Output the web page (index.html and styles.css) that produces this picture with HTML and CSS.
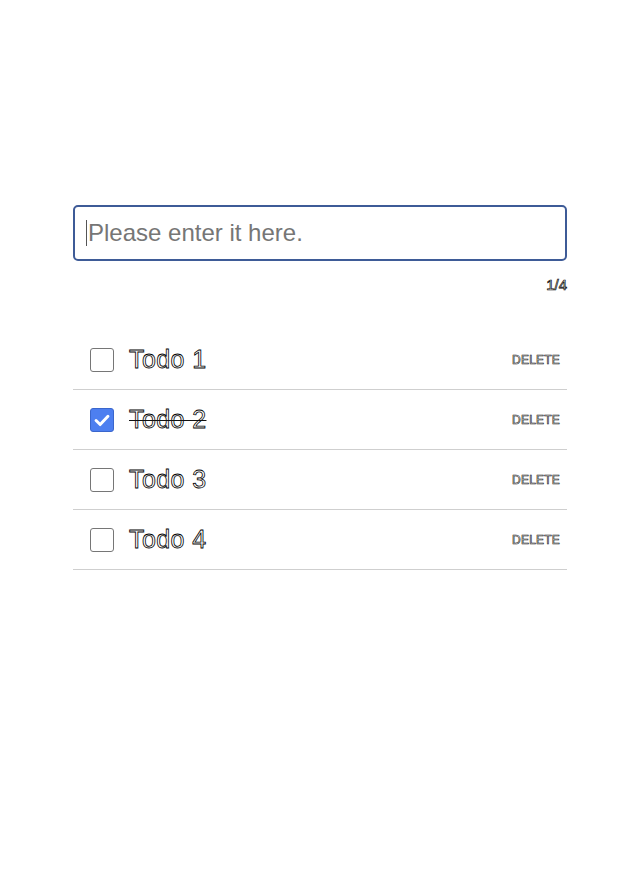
FILE: index.html
```html
<!DOCTYPE html>
<html lang="en">
<head>
<meta charset="utf-8">
<title>Todo</title>
<link rel="stylesheet" href="styles.css">
</head>
<body>
<main class="app">
  <div class="field">
    <span class="caret"></span>
    <input class="entry" type="text" placeholder="Please enter it here.">
  </div>
  <div class="counter">1/4</div>
  <ul class="list">
    <li class="item">
      <span class="box"></span>
      <span class="label">Todo 1</span>
      <button class="del">DELETE</button>
    </li>
    <li class="item done">
      <span class="box checked"><svg viewBox="0 0 24 24" width="24" height="24"><path d="M5.5 12.5l4.5 4.5 8.5-9" fill="none" stroke="#fff" stroke-width="3.2" stroke-linecap="round" stroke-linejoin="round"/></svg></span>
      <span class="label">Todo 2</span>
      <button class="del">DELETE</button>
    </li>
    <li class="item">
      <span class="box"></span>
      <span class="label">Todo 3</span>
      <button class="del">DELETE</button>
    </li>
    <li class="item">
      <span class="box"></span>
      <span class="label">Todo 4</span>
      <button class="del">DELETE</button>
    </li>
  </ul>
</main>
</body>
</html>
```
FILE: styles.css
```css
html, body {
  margin: 0;
  padding: 0;
  background: #fff;
}
body {
  font-family: "Liberation Sans", Arial, sans-serif;
  color: #222;
}
.app {
  width: 494px;
  margin: 0 0 0 73px;
  padding-top: 205px;
}
.field {
  position: relative;
}
.caret {
  position: absolute;
  left: 13px;
  top: 15px;
  width: 1px;
  height: 26px;
  background: #555;
}
.entry {
  display: block;
  box-sizing: border-box;
  width: 494px;
  height: 56px;
  border: 2px solid #3e5b97;
  border-radius: 5px;
  padding: 0 0 0 13px;
  font-family: "Liberation Sans", Arial, sans-serif;
  font-size: 24px;
  color: #222;
  outline: none;
  background: #fff;
}
.entry::placeholder {
  color: #767676;
}
.counter {
  text-align: right;
  font-size: 15px;
  line-height: 18px;
  margin-top: 15px;
  color: transparent;
  -webkit-text-stroke: 0.7px #000;
}
.list {
  list-style: none;
  margin: 36px 0 0 0;
  padding: 0;
}
.item {
  display: flex;
  align-items: center;
  height: 59px;
  border-bottom: 1px solid #cfcfcf;
  padding: 0 7px 0 17px;
}
.box {
  box-sizing: border-box;
  width: 24px;
  height: 24px;
  border: 1px solid #767676;
  border-radius: 3px;
  flex: none;
  display: flex;
  align-items: center;
  justify-content: center;
}
.box.checked {
  background: #4d7ff0;
  border: 1px solid #3a66cc;
}
.box svg {
  display: block;
}
.label {
  margin-left: 15px;
  font-size: 25px;
  letter-spacing: 0.4px;
  font-family: "Liberation Sans", Arial, sans-serif;
  color: transparent;
  -webkit-text-stroke: 0.8px #000;
  flex: 1;
}
.done .label {
  text-decoration: line-through;
  text-decoration-color: #111;
  text-decoration-thickness: 1px;
}
.del {
  background: none;
  border: 0;
  padding: 0;
  font-family: "Liberation Sans", Arial, sans-serif;
  font-size: 12px;
  letter-spacing: 0.2px;
  color: transparent;
  -webkit-text-stroke: 0.6px #111;
  cursor: pointer;
}
```
